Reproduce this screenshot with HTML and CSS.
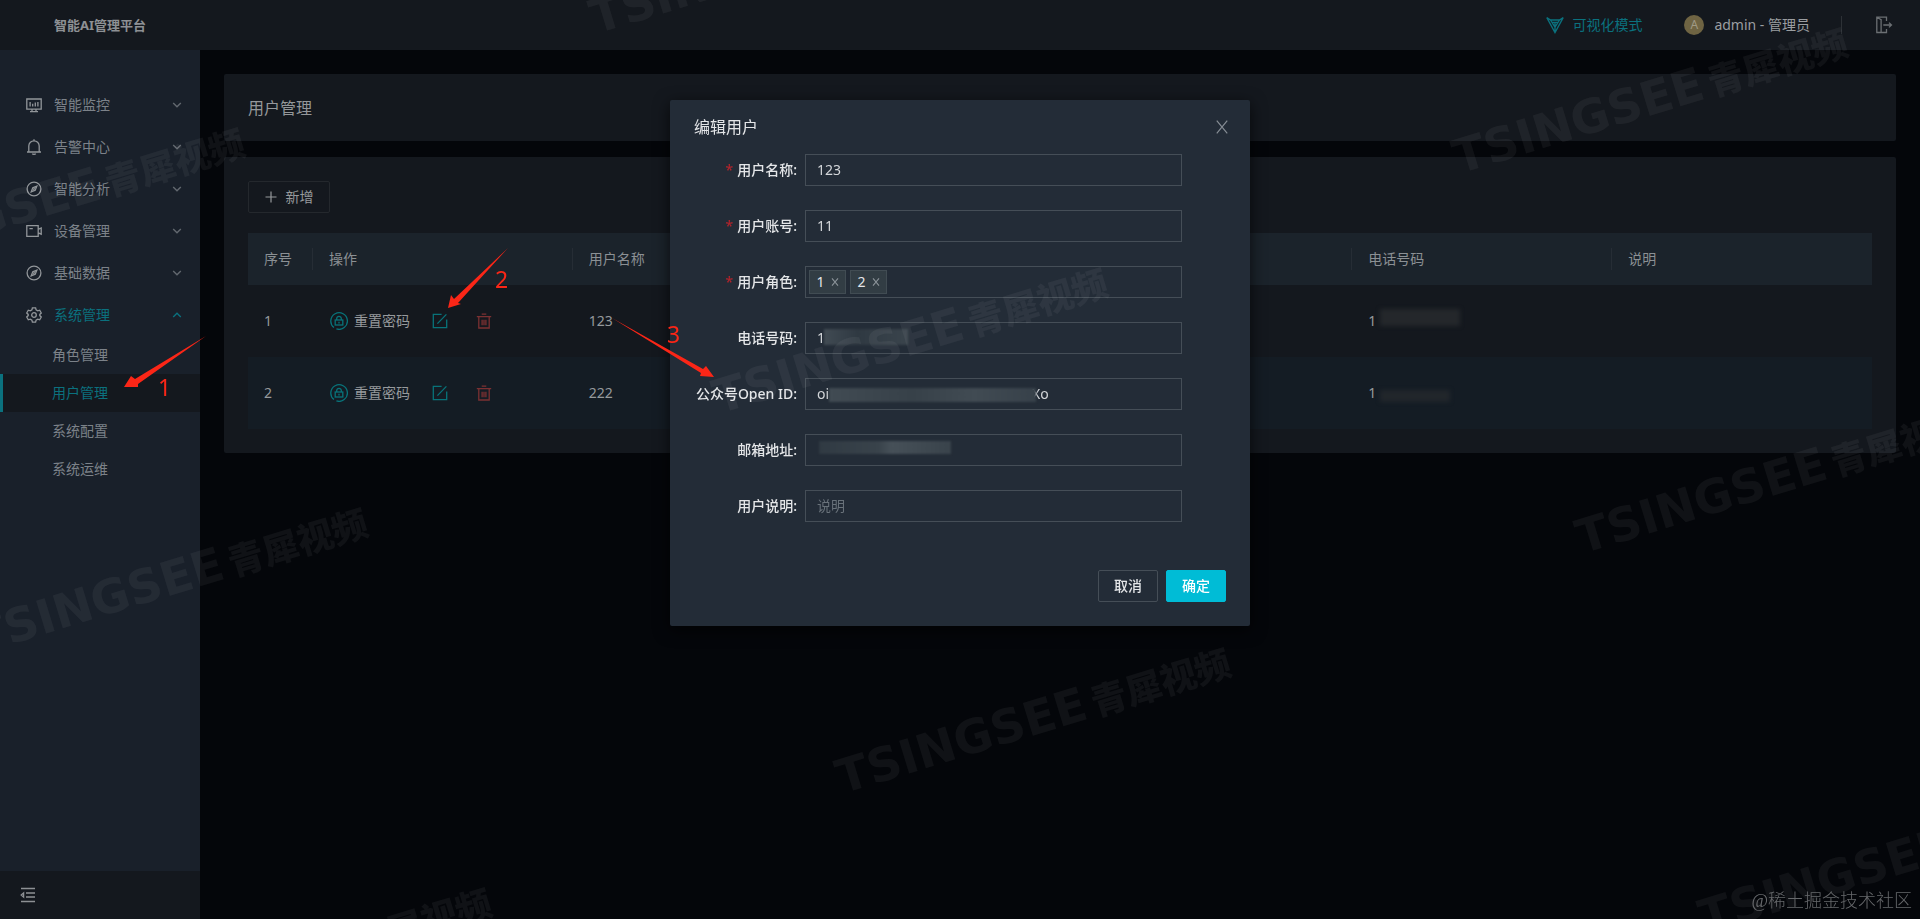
FILE: index.html
```html
<!DOCTYPE html>
<html lang="zh-CN">
<head>
<meta charset="utf-8">
<title>智能AI管理平台</title>
<link rel="stylesheet" href="styles.css">
</head>
<body>
<svg class="defs" aria-hidden="true">
  <symbol id="i-down" viewBox="0 0 10 10"><path d="M1.2 3 5 6.8 8.8 3"/></symbol>
  <symbol id="i-up" viewBox="0 0 10 10"><path d="M1.2 7 5 3.2 8.8 7"/></symbol>
  <symbol id="i-compass" viewBox="0 0 16 16"><circle cx="8" cy="8" r="6.9"/><path d="M10.8 5.2 9.2 9.2 5.2 10.8 6.8 6.8Z"/><path d="m7.3 8.7 1.4-1.4"/></symbol>
  <symbol id="i-lock" viewBox="0 0 18 18"><path d="M4 15.6A8.3 8.3 0 1 1 6.4 16.9"/><rect x="5.2" y="8" width="7.6" height="5"/><path d="M6.7 8V6.6a2.3 2.3 0 0 1 4.6 0V8M9 9.8v1.6"/></symbol>
  <symbol id="i-edit" viewBox="0 0 16 16"><path d="M9.6 1.3H1.3v13.4h13.4V6.5M5.4 10.6l9-9.2"/></symbol>
  <symbol id="i-trash" viewBox="0 0 16 16"><path d="M.8 3.7h14.4M5.7 1.2h4.6M2.8 4v11h10.4V4M6.1 6.8v5.4M8 6.8v5.4M9.9 6.8v5.4"/></symbol>
  <symbol id="i-x" viewBox="0 0 12 12"><path d="m1.5.5 9 11M10.5.5l-9 11"/></symbol>
</svg>

<header class="topbar">
  <h1 class="brand">智能AI管理平台</h1>
  <div class="tools">
    <a class="visual" href="#"><svg class="ico18" viewBox="0 0 18 18"><path d="M.8 1.6 4.5 4h9l3.7-2.4L9 16.6ZM4.5 4 9 11.2 13.5 4M5.8 6.3h6.4M9 6.3v10"/></svg>可视化模式</a>
    <div class="account"><span class="avatar">A</span>admin - 管理员</div>
    <span class="divider"></span>
    <button class="logout" aria-label="退出"><svg class="ico18" viewBox="0 0 18 18"><path d="M11.5 5V1.2H1.8v15.3h9.7V13M1.8 1.2l4.3 2.4v13M6.1 16.5v-13M8.3 9h8M14 6.6 16.5 9 14 11.4"/></svg></button>
  </div>
</header>

<div class="shell">
  <aside class="sidebar">
    <nav class="menu">
      <button class="item"><svg class="ico" viewBox="0 0 16 16"><path d="M.8 2h14.4v10.2H.8ZM4 14.6h8M4.1 5v4.4M6.7 6.8v2.6M9.3 5.4v4M11.9 5v4.4M6 12.5v2M10 12.5v2"/></svg><span>智能监控</span><svg class="arrow"><use href="#i-down"/></svg></button>
      <button class="item"><svg class="ico" viewBox="0 0 16 16"><path d="M1 13h14M2.8 13V7a5.2 5.2 0 0 1 10.4 0v6M8 .2v1.6M6.3 14.6c.5 1 2.9 1 3.4 0"/></svg><span>告警中心</span><svg class="arrow"><use href="#i-down"/></svg></button>
      <button class="item"><svg class="ico"><use href="#i-compass"/></svg><span>智能分析</span><svg class="arrow"><use href="#i-down"/></svg></button>
      <button class="item"><svg class="ico" viewBox="0 0 16 16"><path d="M.8 2.6h11.4v10.8H.8ZM12.2 6.4 15.2 5v6.2l-3-1.4M3.4 5.6h3.4"/></svg><span>设备管理</span><svg class="arrow"><use href="#i-down"/></svg></button>
      <button class="item"><svg class="ico"><use href="#i-compass"/></svg><span>基础数据</span><svg class="arrow"><use href="#i-down"/></svg></button>
      <button class="item open"><svg class="ico" viewBox="0 0 16 16"><path d="M6.4.9h3.2l.5 2 1.6.9 2-.6 1.6 2.8-1.5 1.4v1.2l1.5 1.4-1.6 2.8-2-.6-1.6.9-.5 2H6.4l-.5-2-1.6-.9-2 .6L.7 10l1.5-1.4V7.4L.7 6l1.6-2.8 2 .6 1.6-.9Z"/><circle cx="8" cy="8" r="2.3"/></svg><span>系统管理</span><svg class="arrow"><use href="#i-up"/></svg></button>
      <a class="sub" href="#">角色管理</a>
      <a class="sub active" href="#">用户管理</a>
      <a class="sub" href="#">系统配置</a>
      <a class="sub" href="#">系统运维</a>
    </nav>
    <button class="collapse" aria-label="收起菜单"><svg class="ico" viewBox="0 0 16 16"><path d="M1 1.5h14M6 6h9M6 10h9M1 14.5h14M3.6 6v4L1.2 8Z"/></svg></button>
  </aside>

  <main class="main">
    <section class="panel"><h2 class="page-title">用户管理</h2></section>
    <section class="panel">
      <button class="add"><svg class="plus" viewBox="0 0 12 12"><path d="M6 .5v11M.5 6h11"/></svg>新增</button>
      <table class="grid">
        <colgroup><col class="c-no"><col><col><col><col><col><col></colgroup>
        <thead><tr><th>序号</th><th>操作</th><th>用户名称</th><th></th><th></th><th>电话号码</th><th>说明</th></tr></thead>
        <tbody>
          <tr><td>1</td><td><div class="ops"><button class="reset"><svg class="ico18"><use href="#i-lock"/></svg><span>重置密码</span></button><button class="edit" aria-label="编辑"><svg class="ico"><use href="#i-edit"/></svg></button><button class="del" aria-label="删除"><svg class="ico"><use href="#i-trash"/></svg></button></div></td><td>123</td><td></td><td></td><td><span class="phone">1<i class="smear tall"></i></span></td><td></td></tr>
          <tr><td>2</td><td><div class="ops"><button class="reset"><svg class="ico18"><use href="#i-lock"/></svg><span>重置密码</span></button><button class="edit" aria-label="编辑"><svg class="ico"><use href="#i-edit"/></svg></button><button class="del" aria-label="删除"><svg class="ico"><use href="#i-trash"/></svg></button></div></td><td>222</td><td></td><td></td><td><span class="phone">1<i class="smear"></i></span></td><td></td></tr>
        </tbody>
      </table>
    </section>
  </main>
</div>

<div class="mask">
  <form class="modal" role="dialog" aria-labelledby="dlg">
    <header class="modal-head"><h3 id="dlg">编辑用户</h3><button type="button" class="close" aria-label="关闭"><svg class="x14"><use href="#i-x"/></svg></button></header>
    <div class="row"><label class="req" for="f1">用户名称:</label><div class="field"><input id="f1" type="text" value="123"></div></div>
    <div class="row"><label class="req" for="f2">用户账号:</label><div class="field"><input id="f2" type="text" value="11"></div></div>
    <div class="row"><label class="req" for="f3">用户角色:</label><div class="field tags"><span class="tag">1<button type="button" aria-label="移除 1"><svg class="x8"><use href="#i-x"/></svg></button></span><span class="tag">2<button type="button" aria-label="移除 2"><svg class="x8"><use href="#i-x"/></svg></button></span><input id="f3" type="text"></div></div>
    <div class="row"><label for="f4">电话号码:</label><div class="field"><input id="f4" type="text" value="1"><i class="blot tel"></i></div></div>
    <div class="row"><label for="f5">公众号Open ID:</label><div class="field"><input id="f5" type="text" value="oi"><span class="tail">Xo</span><i class="blot oid"></i></div></div>
    <div class="row"><label for="f6">邮箱地址:</label><div class="field"><input id="f6" type="text"><i class="blot mail"></i></div></div>
    <div class="row"><label for="f7">用户说明:</label><div class="field"><input id="f7" type="text" placeholder="说明"></div></div>
    <footer class="modal-foot"><button type="button" class="btn">取消</button><button type="submit" class="btn primary">确定</button></footer>
  </form>
</div>

<svg class="watermarks" aria-hidden="true">
  <defs><g id="wm"><text transform="rotate(-17)"><tspan class="wm-en">TSINGSEE</tspan><tspan class="wm-cn" dx="6">青犀视频</tspan></text></g></defs>
  <use href="#wm" transform="translate(842 794)"/>
  <use href="#wm" transform="translate(-21 654)"/>
  <use href="#wm" transform="translate(1705 934)"/>
  <use href="#wm" transform="translate(719 414)"/>
  <use href="#wm" transform="translate(-144 274)"/>
  <use href="#wm" transform="translate(1582 554)"/>
  <use href="#wm" transform="translate(1459 174)"/>
  <use href="#wm" transform="translate(596 34)"/>
  <use href="#wm" transform="translate(103 1034)"/>
</svg>

<svg class="notes">
  <path d="M206 336 135 379 131 376 124 387 138 387 138 384Z"/>
  <path d="M508 248 454 299 451 295 448 308 461 304 458 303Z"/>
  <path d="M612 318 703 369 706 366 714 377 700 376 701 373Z"/>
  <text x="158" y="396">1</text>
  <text x="495" y="288">2</text>
  <text x="667" y="343">3</text>
</svg>
<div class="credit">@稀土掘金技术社区</div>
</body>
</html>
```
FILE: styles.css
```css
* { box-sizing: border-box; }
body {
  margin: 0;
  min-height: 100vh;
  display: flex;
  flex-direction: column;
  background: #04060a;
  color: #96999c;
  font: 14px/22px "Noto Sans", "Noto Sans CJK SC", sans-serif;
  overflow: hidden;
}
h1, h2, h3 { margin: 0; font-weight: 400; }
button { padding: 0; border: 0; background: none; color: inherit; font: inherit; cursor: pointer; }
a { color: inherit; text-decoration: none; }
svg { fill: none; stroke: currentColor; flex: none; }
.defs { position: absolute; width: 0; height: 0; }
.ico { width: 16px; height: 16px; stroke-width: 1.3; }
.ico18 { width: 18px; height: 18px; stroke-width: 1.3; }

.topbar {
  height: 50px;
  padding: 0 27px 0 54px;
  display: flex;
  align-items: center;
  justify-content: space-between;
  background: #14181e;
}
.brand { font-size: 13px; font-weight: 700; color: #8d9094; }
.tools { display: flex; align-items: center; }
.visual { display: flex; align-items: center; gap: 8px; color: #0b717e; }
.account { display: flex; align-items: center; gap: 10px; margin-left: 42px; color: #9b9ea1; }
.avatar {
  width: 20px; height: 20px; border-radius: 50%;
  background: #6f6443; color: #a09a86;
  font-size: 12px; line-height: 20px; text-align: center;
}
.divider { width: 1px; height: 18px; margin: 0 33px 0 31px; background: #2d3136; }
.logout { display: flex; color: #6b6f73; }

.shell { flex: 1; display: flex; }
.sidebar { width: 200px; display: flex; flex-direction: column; background: #19202a; color: #7c8289; }
.menu { flex: 1; padding-top: 34px; display: flex; flex-direction: column; }
.item { height: 42px; padding: 0 18px 0 26px; display: flex; align-items: center; gap: 12px; text-align: left; }
.item span { flex: 1; }
.item .ico { color: #92969a; }
.arrow { width: 10px; height: 10px; stroke-width: 1.4; color: #62686f; }
.open, .open .arrow { color: #0b717e; }
.sub { height: 38px; padding-left: 52px; line-height: 38px; }
.active { background: #14181e; color: #0b717e; box-shadow: inset 3px 0 #0b717e; }
.collapse { height: 48px; padding-left: 20px; display: flex; align-items: center; background: #14181e; color: #8d9094; }

.main { flex: 1; padding: 24px; display: flex; flex-direction: column; gap: 16px; }
.panel { padding: 24px; background: #14181e; border-radius: 2px; }
.panel:first-child { padding: 23px 24px 21px; }
.page-title { font-size: 16px; line-height: 23px; color: #94979a; }
.add { height: 32px; width: 82px; display: flex; align-items: center; justify-content: center; gap: 9px; border: 1px solid #24282d; border-radius: 2px; }
.plus { width: 12px; height: 12px; stroke-width: 1.2; }

.grid { width: 100%; margin-top: 20px; table-layout: fixed; border-collapse: collapse; }
.c-no { width: 65px; }
.grid th { height: 52px; padding: 0 16px; text-align: left; font-weight: 400; color: #8b9094; background: linear-gradient(#262d35, #262d35) right center / 1px 22px no-repeat #1b232b; }
.grid th:last-child { background: #1b232b; }
.grid td { height: 72px; padding: 0 16px; }
.grid tbody tr:nth-child(2) { background: #141c24; }
.ops { display: flex; align-items: center; padding-left: 1px; }
.reset { display: flex; align-items: center; gap: 6px; }
.reset svg, .edit { color: #08737a; }
.edit, .del { display: flex; }
.edit { margin: 0 28px 0 22px; }
.del { color: #7b3032; }
.phone { display: flex; align-items: center; gap: 4px; }
.smear { width: 70px; height: 12px; margin-top: 6px; background: #21262b; filter: blur(2px); }
.tall { width: 80px; height: 17px; margin-top: -8px; background: #24272b; }

.mask { position: fixed; inset: 0; padding-top: 100px; display: flex; justify-content: center; align-items: flex-start; }
.modal { width: 580px; padding-bottom: 24px; background: #232c37; color: #e4e6e8; border-radius: 2px; box-shadow: 0 4px 16px #000000b0; }
.modal-head { padding: 16px 21px 16px 24px; display: flex; align-items: center; justify-content: space-between; }
.modal-head h3 { font-size: 16px; line-height: 22px; }
.close { display: flex; color: #878e95; }
.x14 { width: 14px; height: 14px; stroke-width: 1; }
.x8 { width: 8px; height: 8px; stroke-width: 1.6; }
.row { display: flex; margin: 0 68px 24px 0; }
.row label { width: 135px; padding-right: 8px; text-align: right; line-height: 32px; white-space: nowrap; font-weight: 500; }
.req::before { content: "*"; margin-right: 4px; color: #b0242c; }
.field { flex: 1; position: relative; display: flex; height: 32px; border: 1px solid #454e57; }
.field input { flex: 1; min-width: 0; padding: 0 11px; border: 0; outline: 0; background: none; color: #d3d6d9; font: inherit; }
.field input::placeholder { color: #69727a; opacity: 1; }
.tags { padding: 3px; gap: 4px; }
.tag { width: 37px; height: 24px; display: flex; align-items: center; justify-content: center; gap: 6px; border: 1px solid #414c53; background: #323d44; }
.tag button { display: flex; color: #8b9399; }
.blot { position: absolute; background: linear-gradient(90deg, #414b53, #374149 40%, #414b53 70%, #37414a); filter: blur(1px); }
.tel { left: 18px; top: 6px; width: 84px; height: 16px; background: linear-gradient(90deg, #414b53, #2f3942 40%, #3a444c); }
.oid { left: 23px; top: 9px; width: 207px; height: 14px; }
.mail { left: 13px; top: 6px; width: 132px; height: 13px; background: linear-gradient(90deg, #303a43, #39434b 45%, #465058 55%, #39434b); }
.tail { position: absolute; left: 226px; top: 4px; color: #d3d6d9; }
.modal-foot { padding: 24px 24px 0; display: flex; justify-content: flex-end; gap: 8px; }
.btn { width: 60px; height: 32px; border: 1px solid #454e57; border-radius: 2px; font-weight: 500; }
.primary { border-color: #00bcd6; background: #00bcd6; color: #fff; }

.watermarks, .notes { position: fixed; inset: 0; width: 100%; height: 100%; pointer-events: none; stroke: none; }
.watermarks { fill: rgba(255, 255, 255, .05); }
.wm-en { font: 700 47px "DejaVu Sans", sans-serif; }
.wm-cn { font: 900 36px "Noto Sans CJK SC", sans-serif; }
.notes { fill: #fb2617; font-size: 23px; }
.credit {
  position: fixed; right: 8px; bottom: 5px;
  color: #66686b;
  font: 300 18px/26px "Liberation Serif", "Noto Sans CJK SC", serif;
}
```
